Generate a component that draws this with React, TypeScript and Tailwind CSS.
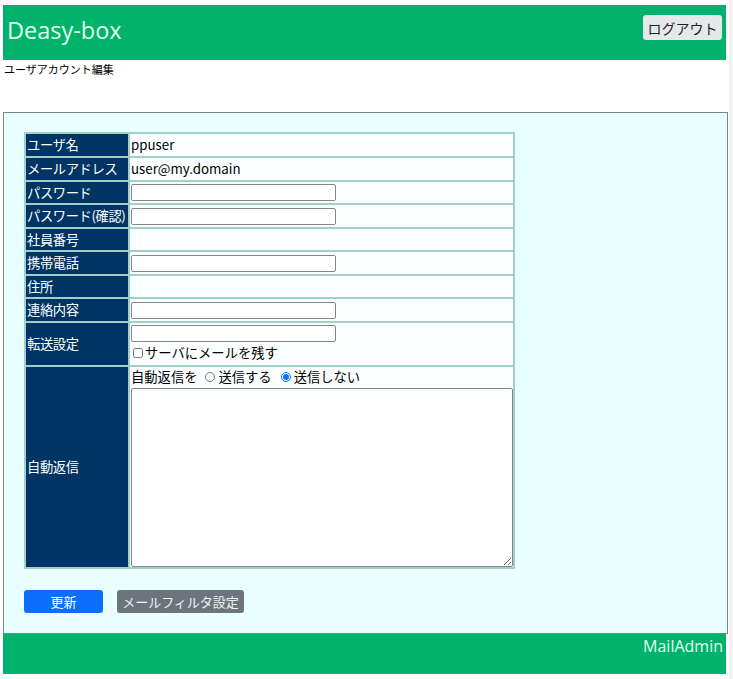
import React from "react";

const JP = { fontFamily: '"Noto Sans CJK JP", "Noto Sans", sans-serif' };

function TextBox() {
  return (
    <input
      type="text"
      className="block w-[205px] h-[17px] border border-[#858585] rounded-[2px] bg-white outline-none"
    />
  );
}

type Row = { label: string; h: string; content: React.ReactNode };

export default function App() {
  const rows: Row[] = [
    { label: "ユーザ名", h: "h-[22px]", content: <span>ppuser</span> },
    { label: "メールアドレス", h: "h-[22px]", content: <span>user@my.domain</span> },
    { label: "パスワード", h: "h-[21px]", content: <TextBox /> },
    { label: "パスワード(確認)", h: "h-[22px]", content: <TextBox /> },
    { label: "社員番号", h: "h-[21px]", content: null },
    { label: "携帯電話", h: "h-[22px]", content: <TextBox /> },
    { label: "住所", h: "h-[21px]", content: null },
    { label: "連絡内容", h: "h-[22px]", content: <TextBox /> },
    {
      label: "転送設定",
      h: "h-[42px]",
      content: (
        <div className="flex flex-col gap-[1px]">
          <TextBox />
          <label className="flex items-center gap-[2px] pl-[2px] leading-[20px]">
            <input type="checkbox" className="w-[10px] h-[10px] m-0" />
            <span>サーバにメールを残す</span>
          </label>
        </div>
      ),
    },
    {
      label: "自動返信",
      h: "h-[200px]",
      content: (
        <div className="flex flex-col h-full">
          <div className="flex items-center leading-[20px]">
            <span>自動返信を</span>
            <label className="flex items-center ml-[8px] gap-[3px]">
              <input type="radio" name="ar" className="w-[10px] h-[10px] m-0" />
              <span>送信する</span>
            </label>
            <label className="flex items-center ml-[9px] gap-[3px]">
              <input type="radio" name="ar" defaultChecked className="w-[10px] h-[10px] m-0" />
              <span>送信しない</span>
            </label>
          </div>
          <textarea className="mt-[1px] w-[382px] h-[179px] border border-[#858585] rounded-[2px] bg-white outline-none resize" />
        </div>
      ),
    },
  ];

  return (
    <div className="flex min-h-[679px] bg-white" style={JP}>
      <div className="ml-[3px] w-[725px] pt-[5px] flex flex-col">
        <header className="h-[55px] w-[723px] bg-[#00b26b] flex items-start justify-between pl-[4px] pr-[4px]">
          <span
            className="mt-[12px] text-[23.5px] text-[#e3ffee] leading-[26px]"
            style={{ fontFamily: '"Open Sans", "Noto Sans", sans-serif' }}
          >
            Deasy-box
          </span>
          <button className="mt-[10px] w-[79px] h-[25px] bg-[#e6e8eb] rounded-[3px] text-[14px] text-[#222] leading-none">
            ログアウト
          </button>
        </header>
        <div className="text-[11px] leading-[18px] text-black pl-[1px]">ユーザアカウント編集</div>
        <div className="h-[34px]" />
        <main className="border border-[#7d8486] bg-[#eaffff] pt-[19px] pl-[20px] pb-[20px]">
          <div className="w-[491px] bg-[#a3cfcb] p-[2px] grid grid-cols-[102px_383px] gap-[2px] text-[13.3px] leading-[20px]">
            {rows.map((r) => (
              <React.Fragment key={r.label}>
                <div
                  className={`${r.h} bg-[#003464] text-white flex items-center pl-[1px] whitespace-nowrap overflow-hidden tracking-[-0.4px]`}
                >
                  {r.label}
                </div>
                <div className={`${r.h} bg-[#fcffff] text-black pl-[1px] flex items-center`}>
                  {r.content}
                </div>
              </React.Fragment>
            ))}
          </div>
          <div className="flex gap-[14px] mt-[21px]">
            <button className="w-[79px] h-[23px] bg-[#0d6efd] text-white text-[13px] rounded-[3px] leading-none">
              更新
            </button>
            <button className="w-[127px] h-[23px] bg-[#6c757d] text-[#f2f2f2] text-[13px] rounded-[3px] leading-none">
              メールフィルタ設定
            </button>
          </div>
        </main>
        <footer className="h-[40px] w-[723px] bg-[#00b26b] flex justify-end pr-[3px] pt-[2px]">
          <span
            className="text-[16px] text-[#e3ffee] leading-[20px]"
            style={{ fontFamily: '"Open Sans", "Noto Sans", sans-serif' }}
          >
            MailAdmin
          </span>
        </footer>
      </div>
      <div className="ml-auto w-[4px] bg-[#f1f1f1]" />
    </div>
  );
}
